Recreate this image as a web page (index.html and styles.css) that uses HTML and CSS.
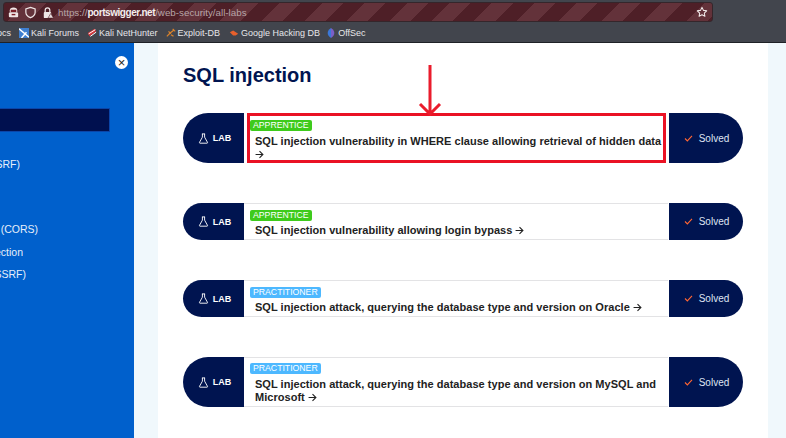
FILE: index.html
```html
<!DOCTYPE html>
<html lang="en">
<head>
<meta charset="utf-8">
<title>SQL injection labs</title>
<link rel="stylesheet" href="styles.css">
</head>
<body>
<header class="chrome">
  <div class="urlbar">
    <div class="url-left">
      <svg class="ico" viewBox="0 0 14 14"><path d="M3 7V4.500C3 2.500 4.500 1.500 7 1.500s4 1 4 3V7z" fill="#f0e6e6"/><rect x="4" y="4" width="6" height="2.500" fill="#7a1f28"/><rect x="2" y="7" width="10" height="5" rx="1" fill="#f0e6e6"/><rect x="5" y="8.500" width="4" height="1.500" fill="#7a1f28"/></svg>
      <svg class="ico" viewBox="0 0 14 14"><path d="M7 1.500l5 1.600v3.600c0 3-2.200 4.800-5 5.800-2.800-1-5-2.800-5-5.800V3.100z" fill="none" stroke="#efe6e6" stroke-width="1.300"/></svg>
      <svg class="ico" viewBox="0 0 14 14"><path d="M4.500 7V4.500a2.500 2.500 0 0 1 5 0V7" fill="none" stroke="#efe6e6" stroke-width="1.300"/><rect x="3" y="6.500" width="8" height="6.500" rx="1" fill="#efe6e6"/><path d="M10.500 8l3 5h-6z" fill="#e8dcdc" stroke="#4e1f27" stroke-width=".6"/></svg>
      <span class="url"><span class="url-dim">https://</span><span class="url-host">portswigger.net</span><span class="url-dim">/web-security/all-labs</span></span>
    </div>
    <svg class="star" viewBox="0 0 14 14"><path d="M7 1.600l1.700 3.500 3.800.5-2.800 2.600.7 3.800L7 10.200 3.600 12l.7-3.800L1.500 5.600l3.800-.5z" fill="none" stroke="#f3ecec" stroke-width="1.200" stroke-linejoin="round"/></svg>
  </div>
  <nav class="bookmarks">
    <span class="bm bm-cut">ocs</span>
    <span class="bm"><svg class="bm-ico" viewBox="0 0 12 12"><rect width="12" height="12" fill="#3f7fd0"/><path d="M0 1l12 10M3 12L9 5" stroke="#fff" stroke-width="1.800"/></svg>Kali Forums</span>
    <span class="bm"><svg class="bm-ico" viewBox="0 0 12 12"><path d="M1 6l8-5 2 3-8 6z" fill="#d8343a"/><path d="M2 7l8-5M4 10l7-5" stroke="#fff" stroke-width="1.200"/></svg>Kali NetHunter</span>
    <span class="bm"><svg class="bm-ico" viewBox="0 0 12 12"><path d="M1 10l4-4 5-4M3 4l3 3M6 8l3 2M8 1l3 3" stroke="#d9822b" stroke-width="1.500" fill="none"/></svg>Exploit-DB</span>
    <span class="bm bm-wide"><svg class="bm-ico" viewBox="0 0 12 12"><path d="M1 5l4-2 6 4-3 2H5z" fill="#e8602c"/></svg>Google Hacking DB</span>
    <span class="bm"><svg class="bm-ico" viewBox="0 0 12 12"><path d="M6 0C3 2 2 4 2 6s1 4 4 6z" fill="#3b78d8"/><path d="M6 0c3 2 4 4 4 6s-1 4-4 6z" fill="#7a5fc8"/></svg>OffSec</span>
  </nav>
</header>

<div class="page">
  <aside class="sidebar">
    <div class="close-row"><span class="close">×</span></div>
    <div class="search"></div>
    <ul class="side-list">
      <li class="side-item side-a"><span>Server-side request forgery (SSRF)</span></li>
      <li class="side-item side-b"><span>Cross-origin resource sharing (CORS)</span></li>
      <li class="side-item side-c"><span>XML external entity injection</span></li>
      <li class="side-item side-d"><span>Server-side request forgery (SSRF)</span></li>
    </ul>
  </aside>
  <div class="gutter"></div>
  <main class="content">
    <h1 class="title">SQL injection</h1>

    <article class="lab lab-tall lab-first">
      <div class="lab-tag"><svg class="flask" viewBox="0 0 12 12"><path d="M4.300 1h3.400M4.800 1v3.500L1.600 10.300c-.2.400 0 .8.500.8h7.800c.5 0 .7-.4.500-.8L7.200 4.500V1" fill="none" stroke="#fff" stroke-width="1"/></svg>LAB</div>
      <div class="lab-body lab-marked">
        <span class="badge badge-green">APPRENTICE</span>
        <a class="lab-link">SQL injection vulnerability in WHERE clause allowing retrieval of hidden data <svg class="go" viewBox="0 0 8 8"><path d="M.5 4h6.500M4 1l3 3-3 3" fill="none" stroke="#222" stroke-width="1"/></svg></a>
      </div>
      <div class="lab-status"><svg class="check" viewBox="0 0 10 8"><path d="M1 4l2.700 2.700L9 1" fill="none" stroke="#ff6633" stroke-width="1.300"/></svg>Solved</div>
    </article>

    <article class="lab">
      <div class="lab-tag"><svg class="flask" viewBox="0 0 12 12"><path d="M4.300 1h3.400M4.800 1v3.500L1.600 10.300c-.2.400 0 .8.500.8h7.800c.5 0 .7-.4.500-.8L7.200 4.500V1" fill="none" stroke="#fff" stroke-width="1"/></svg>LAB</div>
      <div class="lab-body">
        <span class="badge badge-green">APPRENTICE</span>
        <a class="lab-link">SQL injection vulnerability allowing login bypass <svg class="go" viewBox="0 0 8 8"><path d="M.5 4h6.500M4 1l3 3-3 3" fill="none" stroke="#222" stroke-width="1"/></svg></a>
      </div>
      <div class="lab-status"><svg class="check" viewBox="0 0 10 8"><path d="M1 4l2.700 2.700L9 1" fill="none" stroke="#ff6633" stroke-width="1.300"/></svg>Solved</div>
    </article>

    <article class="lab">
      <div class="lab-tag"><svg class="flask" viewBox="0 0 12 12"><path d="M4.300 1h3.400M4.800 1v3.500L1.600 10.300c-.2.400 0 .8.500.8h7.800c.5 0 .7-.4.500-.8L7.200 4.500V1" fill="none" stroke="#fff" stroke-width="1"/></svg>LAB</div>
      <div class="lab-body">
        <span class="badge badge-blue">PRACTITIONER</span>
        <a class="lab-link">SQL injection attack, querying the database type and version on Oracle <svg class="go" viewBox="0 0 8 8"><path d="M.5 4h6.500M4 1l3 3-3 3" fill="none" stroke="#222" stroke-width="1"/></svg></a>
      </div>
      <div class="lab-status"><svg class="check" viewBox="0 0 10 8"><path d="M1 4l2.700 2.700L9 1" fill="none" stroke="#ff6633" stroke-width="1.300"/></svg>Solved</div>
    </article>

    <article class="lab lab-tall">
      <div class="lab-tag"><svg class="flask" viewBox="0 0 12 12"><path d="M4.300 1h3.400M4.800 1v3.500L1.600 10.300c-.2.400 0 .8.500.8h7.800c.5 0 .7-.4.500-.8L7.200 4.500V1" fill="none" stroke="#fff" stroke-width="1"/></svg>LAB</div>
      <div class="lab-body">
        <span class="badge badge-blue">PRACTITIONER</span>
        <a class="lab-link">SQL injection attack, querying the database type and version on MySQL and Microsoft <svg class="go" viewBox="0 0 8 8"><path d="M.5 4h6.500M4 1l3 3-3 3" fill="none" stroke="#222" stroke-width="1"/></svg></a>
      </div>
      <div class="lab-status"><svg class="check" viewBox="0 0 10 8"><path d="M1 4l2.700 2.700L9 1" fill="none" stroke="#ff6633" stroke-width="1.300"/></svg>Solved</div>
    </article>

    <svg class="annot-arrow" viewBox="0 0 26 52"><path d="M13 1v49M3 40l10 10 10-10" fill="none" stroke="#ea1c2c" stroke-width="3"/></svg>
  </main>
  <div class="gutter-right"></div>
</div>
</body>
</html>
```
FILE: styles.css
```css
* { box-sizing: border-box; }
html, body { margin: 0; padding: 0; }
body {
  width: 786px;
  height: 438px;
  overflow: hidden;
  font-family: "Liberation Sans", Arial, sans-serif;
  background: #fff;
}
.chrome {
  height: 43px;
  background: #42454d;
  border-bottom: 1px solid #1f2126;
  padding-top: 2px;
}
.urlbar {
  width: 710px;
  margin-left: 3px;
  height: 20px;
  display: flex;
  align-items: center;
  justify-content: space-between;
  padding: 0 4px 0 3px;
  border: 1px solid #35262b;
  border-radius: 3px;
  background: repeating-linear-gradient(135deg, #4e1f27 0 15px, #63323a 15px 30px);
}
.url-left { display: flex; align-items: center; gap: 3px; }
.ico { width: 13px; height: 13px; margin-right: 1px; }
.url { font-size: 9.800px; white-space: nowrap; }
.url-dim { color: #b7a5a8; }
.url-host { color: #f4eeee; font-size: 10px; font-weight: 700; letter-spacing: -.45px; }
.star { width: 12px; height: 12px; }
.bookmarks {
  display: flex;
  align-items: center;
  height: 20px;
  margin: 1px 0 0 -3px;
  font-size: 9px;
  color: #e6e7ea;
  white-space: nowrap;
}
.bm { display: flex; align-items: center; margin-right: 8px; }
.bm-wide { margin: 0 6px 0 1px; }
.bm-ico { width: 10px; height: 10px; margin-right: 2px; }
.page {
  display: flex;
  height: 395px;
  overflow: hidden;
}
.sidebar {
  width: 134px;
  flex: none;
  background: #0060cc;
  color: #e6effa;
  font-size: 10.500px;
}
.close-row {
  display: flex;
  justify-content: flex-end;
  padding: 13px 6px 0 0;
}
.close {
  width: 13px;
  height: 13px;
  border-radius: 50%;
  background: #fff;
  color: #222;
  font-size: 13px;
  line-height: 13px;
  text-align: center;
}
.search {
  width: 110px;
  height: 24px;
  margin-top: 39px;
  background: #00104f;
  border: 1px solid #0a45a8;
  border-left: 0;
}
.side-list { list-style: none; margin: 0; padding: 0; }
.side-item { display: flex; justify-content: flex-end; overflow: hidden; white-space: nowrap; height: 14px; line-height: 14px; }
.side-a { width: 20px; margin-top: 25px; }
.side-b { width: 38px; margin-top: 51px; }
.side-c { width: 23px; margin-top: 9px; }
.side-d { width: 26px; margin-top: 8px; }
.gutter { width: 24px; flex: none; background: #f0f8fc; }
.gutter-right { width: 18px; flex: none; background: #f0f8fc; }
.content {
  position: relative;
  width: 610px;
  flex: none;
  background: #fff;
  padding: 0 25px;
}
.title {
  margin: 20px 0 0;
  font-size: 20px;
  line-height: 24px;
  font-weight: 700;
  color: #001450;
}
.lab {
  display: flex;
  align-items: stretch;
  height: 37px;
  width: 560px;
  margin-top: 40px;
}
.lab-tall { height: 50px; }
.lab-first { margin-top: 26px; }
.lab-tag {
  width: 61px;
  flex: none;
  display: flex;
  align-items: center;
  justify-content: center;
  gap: 4px;
  padding-left: 2px;
  color: #fff;
  background: #001450;
  font-size: 9px;
  font-weight: 700;
  border-radius: 25px 0 0 25px;
}
.flask { width: 11px; height: 11px; }
.lab-body {
  flex: 1;
  min-width: 0;
  display: flex;
  flex-direction: column;
  align-items: flex-start;
  padding: 1px 6px 0 6px;
  border-top: 1px solid #e3e3e5;
  border-bottom: 1px solid #e3e3e5;
}
.lab-marked {
  position: relative;
  border-color: transparent;
  padding-top: 6px;
}
.lab-marked::after {
  content: "";
  position: absolute;
  left: 3px;
  top: -1px;
  right: 2px;
  bottom: -1px;
  border: 3px solid #ea1224;
}
.badge {
  display: block;
  height: 11px;
  line-height: 11px;
  padding: 0 3px;
  font-size: 8.700px;
  color: #fff;
  border-radius: 2px;
}
.lab-body:not(.lab-marked) .badge { margin-top: 4px; }
.lab:not(.lab-tall) .badge { margin-top: 5px; }
.badge-green { background: #3ecb1c; }
.badge-blue { background: #4db8ff; }
.lab-link {
  margin: 4px 0 0 5px;
  font-size: 11px;
  line-height: 13px;
  font-weight: 700;
  letter-spacing: .03px;
  color: #222;
}
.lab:not(.lab-tall) .lab-link { margin-top: 3px; }
.go { width: 9px; height: 9px; vertical-align: -1px; }
.lab-status {
  width: 74px;
  flex: none;
  display: flex;
  align-items: center;
  justify-content: center;
  gap: 6px;
  padding-left: 1px;
  margin-left: 1px;
  color: #dfe4f2;
  background: #001450;
  font-size: 10px;
  border-radius: 0 25px 25px 0;
}
.check { width: 9px; height: 7px; }
.annot-arrow {
  position: absolute;
  left: 259px;
  top: 21px;
  width: 26px;
  height: 52px;
}
```
